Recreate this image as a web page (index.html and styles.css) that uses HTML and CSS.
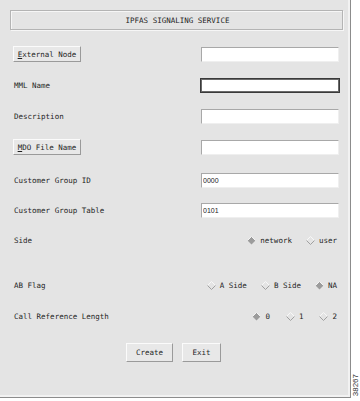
FILE: index.html
```html
<!DOCTYPE html>
<html lang="en">
<head>
    <meta charset="UTF-8">
    <meta name="viewport" content="width=device-width, initial-scale=1.0">
    <title>IPFAS Signaling Service</title>
    <link rel="stylesheet" href="styles.css">
</head>
<body>
    <div class="screen">
        <div class="panel">
            <div class="titulo">IPFAS SIGNALING SERVICE</div>
            <div class="form">
                <div class="row first">
                    <button class="btn"><u>E</u>xternal Node</button>
                    <input type="text" class="field">
                </div>
                <div class="row">
                    <label>MML Name</label>
                    <input type="text" class="field focused">
                </div>
                <div class="row">
                    <label>Description</label>
                    <input type="text" class="field">
                </div>
                <div class="row">
                    <button class="btn"><u>M</u>DO File Name</button>
                    <input type="text" class="field">
                </div>
                <div class="row gap17">
                    <label>Customer Group ID</label>
                    <input type="text" class="field" value="0000">
                </div>
                <div class="row gap14">
                    <label>Customer Group Table</label>
                    <input type="text" class="field" value="0101">
                </div>
                <div class="row gap14">
                    <label>Side</label>
                    <div class="radios">
                        <span class="radio on"><svg width="9" height="9" viewBox="0 0 9 9"><polygon points="4.5,0.5 8.5,4.5 4.5,8.5 0.5,4.5" fill="#9c9c9c"/><polyline points="0.5,4.5 4.5,0.5 8.5,4.5" fill="none" stroke="#f4f4f4"/></svg>network</span>
                        <span class="radio"><svg width="9" height="9" viewBox="0 0 9 9"><polyline points="0.5,4.5 4.5,0.5 8.5,4.5" fill="none" stroke="#f8f8f8"/><polyline points="0.5,4.5 4.5,8.5 8.5,4.5" fill="none" stroke="#a0a0a0"/></svg>user</span>
                    </div>
                </div>
                <div class="row gap29">
                    <label>AB Flag</label>
                    <div class="radios">
                        <span class="radio"><svg width="9" height="9" viewBox="0 0 9 9"><polyline points="0.5,4.5 4.5,0.5 8.5,4.5" fill="none" stroke="#f8f8f8"/><polyline points="0.5,4.5 4.5,8.5 8.5,4.5" fill="none" stroke="#a0a0a0"/></svg>A Side</span>
                        <span class="radio"><svg width="9" height="9" viewBox="0 0 9 9"><polyline points="0.5,4.5 4.5,0.5 8.5,4.5" fill="none" stroke="#f8f8f8"/><polyline points="0.5,4.5 4.5,8.5 8.5,4.5" fill="none" stroke="#a0a0a0"/></svg>B Side</span>
                        <span class="radio on"><svg width="9" height="9" viewBox="0 0 9 9"><polygon points="4.5,0.5 8.5,4.5 4.5,8.5 0.5,4.5" fill="#9c9c9c"/><polyline points="0.5,4.5 4.5,0.5 8.5,4.5" fill="none" stroke="#f4f4f4"/></svg>NA</span>
                    </div>
                </div>
                <div class="row">
                    <label>Call Reference Length</label>
                    <div class="radios wide">
                        <span class="radio on"><svg width="9" height="9" viewBox="0 0 9 9"><polygon points="4.5,0.5 8.5,4.5 4.5,8.5 0.5,4.5" fill="#9c9c9c"/><polyline points="0.5,4.5 4.5,0.5 8.5,4.5" fill="none" stroke="#f4f4f4"/></svg>0</span>
                        <span class="radio"><svg width="9" height="9" viewBox="0 0 9 9"><polyline points="0.5,4.5 4.5,0.5 8.5,4.5" fill="none" stroke="#f8f8f8"/><polyline points="0.5,4.5 4.5,8.5 8.5,4.5" fill="none" stroke="#a0a0a0"/></svg>1</span>
                        <span class="radio"><svg width="9" height="9" viewBox="0 0 9 9"><polyline points="0.5,4.5 4.5,0.5 8.5,4.5" fill="none" stroke="#f8f8f8"/><polyline points="0.5,4.5 4.5,8.5 8.5,4.5" fill="none" stroke="#a0a0a0"/></svg>2</span>
                    </div>
                </div>
            </div>
            <div class="acoes">
                <button class="btn grande create">Create</button>
                <button class="btn grande exit">Exit</button>
            </div>
        </div>
        <div class="nota"><span>38267</span></div>
    </div>
</body>
</html>
```

FILE: styles.css
```css
* {
    margin: 0;
    padding: 0;
    box-sizing: border-box;
}
body {
    background-color: #ffffff;
    font-family: "DejaVu Sans Mono", monospace;
    font-size: 7.5px;
    color: #1e1e1e;
}
.screen {
    display: flex;
    width: 360px;
    height: 401px;
}
.panel {
    width: 351px;
    height: 398px;
    background-color: #e4e4e4;
    border-right: 1px solid #8c8c8c;
    border-bottom: 1px solid #8c8c8c;
    box-shadow: inset -2px -2px 0 #f2f2f2;
    padding: 10px 7px 0 10px;
}
.titulo {
    height: 20px;
    border: 1px solid #b4b4b4;
    box-shadow: inset 1px 1px 0 #f6f6f6, 1px 1px 0 #f6f6f6;
    display: flex;
    align-items: center;
    justify-content: center;
    padding-left: 2px;
}
.form {
    padding: 0 4px 0 3px;
}
.row {
    height: 16px;
    margin-top: 15px;
    display: flex;
    align-items: center;
    justify-content: space-between;
}
.row.first {
    margin-top: 16px;
}
.row.gap17 {
    margin-top: 17px;
}
.row.gap14 {
    margin-top: 14px;
}
.row.gap29 {
    margin-top: 29px;
}
.row label {
    padding-left: 1px;
}
.btn {
    font-family: "DejaVu Sans Mono", monospace;
    font-size: 7.5px;
    color: #1e1e1e;
    background-color: #e8e8e8;
    border: 1px solid;
    border-color: #fbfbfb #9a9a9a #9a9a9a #fbfbfb;
    height: 16px;
    width: 68px;
    padding: 0;
}
.btn u {
    text-underline-offset: 1px;
}
.field {
    width: 138px;
    height: 15px;
    background-color: #ffffff;
    border: 1px solid;
    border-color: #a8a8a8 #efefef #efefef #a8a8a8;
    font-family: "Liberation Sans", Arial, sans-serif;
    font-size: 7px;
    color: #222;
    padding: 0 1px;
    outline: none;
}
.field.focused {
    border: 1px solid #3a3a3a;
    box-shadow: inset 0 0 0 1px #6a6a6a;
    width: 140px;
    margin-right: -1px;
}
.radios {
    display: flex;
    gap: 14px;
    padding-right: 2px;
}
.radios.wide {
    gap: 16px;
}
.radio {
    display: flex;
    align-items: center;
    gap: 4px;
}
.acoes {
    display: flex;
    justify-content: center;
    gap: 9px;
    margin-top: 19px;
    padding-right: 6px;
}
.btn.grande {
    height: 19px;
}
.btn.create {
    width: 47px;
}
.btn.exit {
    width: 39px;
}
.nota {
    flex: 1;
    display: flex;
    flex-direction: column;
    justify-content: flex-end;
    align-items: center;
    padding-bottom: 5px;
}
.nota span {
    writing-mode: vertical-rl;
    transform: rotate(180deg);
    font-family: "Liberation Sans", Arial, sans-serif;
    font-size: 8px;
    color: #333;
}
```
